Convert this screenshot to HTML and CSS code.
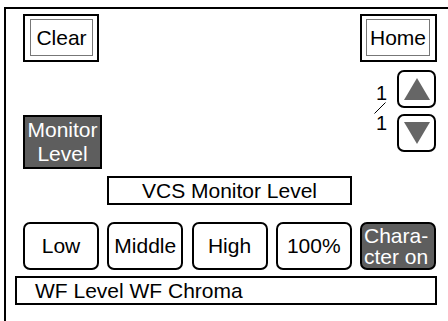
FILE: index.html
```html
<!DOCTYPE html>
<html lang="en">
<head>
    <meta charset="UTF-8">
    <meta name="viewport" content="width=device-width, initial-scale=1.0">
    <title>VCS Monitor Level</title>
    <link rel="stylesheet" href="styles.css">
</head>
<body>
    <div class="screen">
        <div class="top-bar">
            <button class="frame-btn"><span>Clear</span></button>
            <button class="frame-btn home"><span>Home</span></button>
        </div>

        <div class="middle">
            <button class="dark-btn monitor">Monitor<br>Level</button>
            <div class="pager">
                <div class="page-count">
                    <span class="num">1</span>
                    <svg class="slash" width="12" height="12" viewBox="0 0 12 12">
                        <line x1="0.5" y1="11.5" x2="11.5" y2="0.5" stroke="#000" stroke-width="1"/>
                    </svg>
                    <span class="num">1</span>
                </div>
                <div class="arrows">
                    <button class="arrow-btn">
                        <svg width="26" height="22" viewBox="0 0 26 22"><polygon points="13,0 26,22 0,22" fill="#666"/></svg>
                    </button>
                    <button class="arrow-btn">
                        <svg width="26" height="22" viewBox="0 0 26 22"><polygon points="0,0 26,0 13,22" fill="#666"/></svg>
                    </button>
                </div>
            </div>
        </div>

        <div class="title-box">VCS Monitor Level</div>

        <div class="options">
            <button class="opt-btn">Low</button>
            <button class="opt-btn">Middle</button>
            <button class="opt-btn">High</button>
            <button class="opt-btn">100%</button>
            <button class="opt-btn char-on">Chara-<br>cter on</button>
        </div>

        <div class="status-bar">WF Level WF Chroma</div>
    </div>
</body>
</html>
```

FILE: styles.css
```css
body {
    margin: 0;
    background: #fff;
    overflow: hidden;
    font-family: "Liberation Sans", Arial, sans-serif;
    color: #000;
}

button {
    font-family: inherit;
    font-size: 21px;
    color: #000;
    background: #fff;
    padding: 0;
    margin: 0;
    box-sizing: border-box;
}

.screen {
    margin: 7px 0 0 4px;
    height: calc(100vh - 7px);
    box-sizing: border-box;
    border-top: 2px solid #000;
    border-left: 2px solid #000;
}

.top-bar {
    display: flex;
    justify-content: space-between;
    padding: 5px 11px 0 17px;
}

.frame-btn {
    width: 76px;
    height: 48px;
    border: 2px solid #000;
    padding: 3px 4px 4px 5px;
    display: flex;
}

.frame-btn.home {
    width: 77px;
    padding: 3px 5px 4px 4px;
}

.frame-btn span {
    flex: 1;
    border: 1px solid #777;
    display: flex;
    align-items: center;
    justify-content: center;
}

.middle {
    display: flex;
    justify-content: space-between;
    align-items: flex-start;
    padding: 0 12px 0 17px;
}

.dark-btn {
    background: #5e5e5e;
    color: #fff;
    border: 2px solid #000;
}

.monitor {
    width: 79px;
    height: 54px;
    margin-top: 53px;
    line-height: 24px;
}

.pager {
    display: flex;
    margin-top: 8px;
    gap: 10px;
}

.page-count {
    display: flex;
    flex-direction: column;
    align-items: center;
    margin-top: 14px;
    font-size: 20px;
    line-height: 18px;
}

.slash {
    display: block;
    margin: 0 0 0 -2px;
}

.arrows {
    display: flex;
    flex-direction: column;
    gap: 6px;
}

.arrow-btn {
    width: 39px;
    height: 38px;
    border: 2px solid #000;
    border-radius: 7px;
    display: flex;
    align-items: center;
    justify-content: center;
}

.title-box {
    margin: 7px 0 0 101px;
    width: 245px;
    height: 29px;
    box-sizing: border-box;
    border: 2px solid #000;
    font-size: 21px;
    line-height: 25px;
    text-align: center;
}

.options {
    display: flex;
    gap: 8.25px;
    margin-top: 17px;
    padding-left: 17px;
}

.opt-btn {
    width: 76px;
    height: 48px;
    border: 2px solid #000;
    border-radius: 7px;
}

.char-on {
    background: #5e5e5e;
    color: #fff;
    text-align: left;
    padding-left: 2px;
    line-height: 21px;
}

.status-bar {
    margin: 6px 0 0 9px;
    width: 422px;
    height: 29px;
    box-sizing: border-box;
    border: 2px solid #000;
    padding-left: 18px;
    font-size: 21px;
    line-height: 25px;
}
```
